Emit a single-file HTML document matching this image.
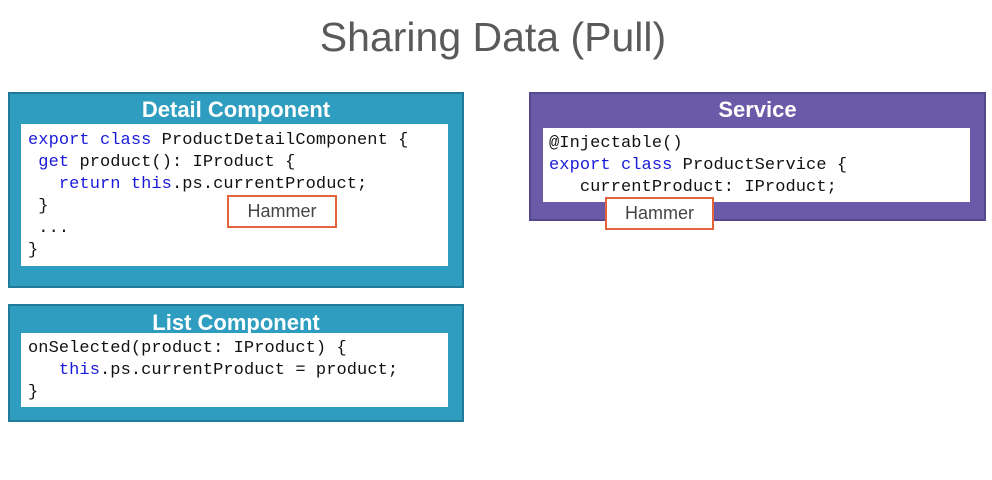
<!DOCTYPE html>
<html><head><meta charset="utf-8"><style>
body{margin:0;width:992px;height:480px;background:#fff;position:relative;overflow:hidden;font-family:"Liberation Sans",sans-serif}
.t{position:absolute;left:0;width:986px;text-align:center;top:14px;font-size:41px;color:#5a5a5a;font-weight:300}
.box{position:absolute;box-sizing:border-box;border:2px solid #1f7b99;background:#2e9dbf}
.h{position:absolute;left:0;right:0;text-align:center;color:#fff;font-weight:bold;font-size:22px}
.w{position:absolute;background:#fff}
pre{margin:0;position:absolute;font-family:"Liberation Mono",monospace;font-size:17px;line-height:22px;color:#111;letter-spacing:0.08px}
.k{color:#1a1adb}
.hm{position:absolute;box-sizing:border-box;border:2px solid #e3643a;background:#fff;color:#444;font-size:18px;text-align:center;line-height:29px}
</style></head><body>
<div class="t">Sharing Data (Pull)</div>

<div class="box" style="left:8px;top:92px;width:456px;height:196px"><div class="h" style="top:3px">Detail Component</div></div>
<div class="w" style="left:21px;top:124px;width:427px;height:142px"></div>
<pre style="left:28px;top:130px"><span class="k">export class</span> ProductDetailComponent {
 <span class="k">get</span> product(): IProduct {
   <span class="k">return this</span>.ps.currentProduct;
 }
 ...
}</pre>
<div class="hm" style="left:227px;top:195px;width:110px;height:33px">Hammer</div>

<div class="box" style="left:8px;top:304px;width:456px;height:118px"><div class="h" style="top:4px">List Component</div></div>
<div class="w" style="left:21px;top:333px;width:427px;height:74px"></div>
<pre style="left:28px;top:338px">onSelected(product: IProduct) {
   <span class="k">this</span>.ps.currentProduct = product;
}</pre>

<div class="box" style="left:529px;top:92px;width:457px;height:129px;background:#6a5aa8;border-color:#56488f"><div class="h" style="top:3px">Service</div></div>
<div class="w" style="left:543px;top:128px;width:427px;height:74px"></div>
<pre style="left:549px;top:133px">@Injectable()
<span class="k">export class</span> ProductService {
   currentProduct: IProduct;</pre>
<div class="hm" style="left:605px;top:197px;width:109px;height:33px">Hammer</div>
</body></html>
